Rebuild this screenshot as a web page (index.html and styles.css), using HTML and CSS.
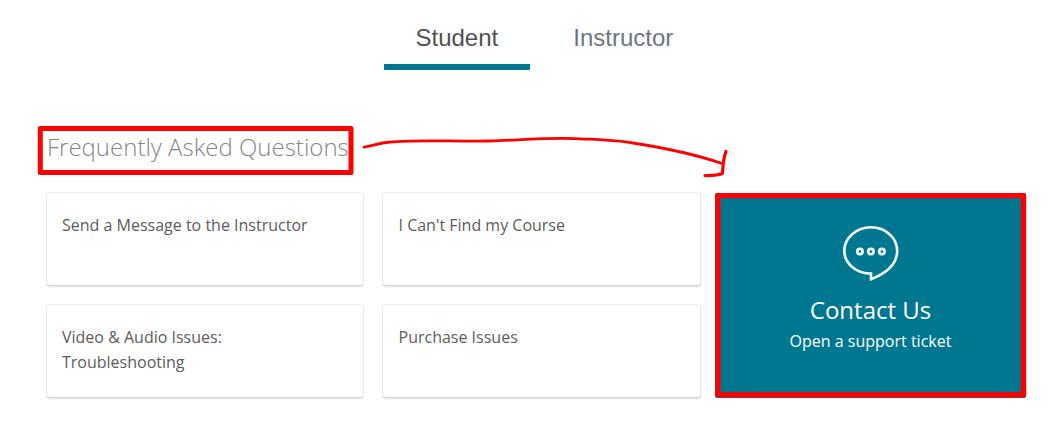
FILE: index.html
```html
<!DOCTYPE html>
<html lang="en">
<head>
<meta charset="utf-8">
<title>Support</title>
<link rel="stylesheet" href="styles.css">
</head>
<body>
<nav class="tabs">
  <a class="tab active">Student</a>
  <a class="tab">Instructor</a>
</nav>
<main class="support">
  <h2 class="heading">Frequently Asked Questions</h2>
  <div class="columns">
    <div class="faq">
      <a class="card">Send a Message to the Instructor</a>
      <a class="card">I Can't Find my Course</a>
      <a class="card">Video &amp; Audio Issues:<br>Troubleshooting</a>
      <a class="card">Purchase Issues</a>
    </div>
    <a class="contact">
      <svg class="bubble" width="56" height="56" viewBox="0 0 56 56" fill="none" stroke="#f4fafb">
        <path stroke-width="2.6" d="M28 1.3C13.3 1.3 1.3 11.8 1.3 24.7S13.3 47.4 28 47.6V53.2C44 47 54.2 37.500 54.2 24.700 54.2 11.800 42.500 1.300 28 1.300Z"/>
        <g stroke-width="2.6"><circle cx="16.9" cy="25.600" r="2.700"/><circle cx="27.900" cy="25.600" r="2.700"/><circle cx="38.900" cy="25.600" r="2.700"/></g>
      </svg>
      <span class="contact-title">Contact Us</span>
      <span class="contact-sub">Open a support ticket</span>
    </a>
  </div>
</main>
<svg class="markup" width="1058" height="429" viewBox="0 0 1058 429" fill="none" stroke="#f00" stroke-linecap="round" stroke-linejoin="round">
  <rect x="40.3" y="128.5" width="310.7" height="44" stroke-width="5"/>
  <rect x="717.8" y="195.6" width="305.8" height="199.2" stroke-width="5.2"/>
  <path stroke-width="2.8" d="M364 147.200C373 145.500 380 143 390 142C416 139.500 450 141.500 490 141C520 140 548 137.500 575 138.600C600 139.800 617 140 633 143C665 148 693 153.500 722 163.500"/>
  <path stroke-width="3.2" d="M726 151.500C723 159 723 166 722.500 173.500C717 175.500 711 175.700 705 175.500"/>
</svg>
</body>
</html>
```
FILE: styles.css
```css
* { box-sizing: border-box; }

body {
  margin: 0;
  height: 429px;
  overflow: hidden;
  background: #fff;
  color: #5c5c5c;
  font-family: "Open Sans", sans-serif;
}

.tabs {
  display: flex;
  gap: 11px;
  padding-left: 383.5px;
  height: 70px;
}

.tab {
  padding: 22px 32px 0;
  border-bottom: 6px solid transparent;
  border-radius: 1px;
  color: #6e7585;
  font: 24px/32px "Liberation Sans", Arial, sans-serif;
}

.tab.active {
  border-bottom-color: #007791;
  color: #505050;
}

.support { padding: 59px 32px 0 47px; }

.heading {
  margin: 0;
  font-size: 24px;
  font-weight: 300;
  line-height: 36px;
  color: #868686;
}

.columns {
  display: flex;
  gap: 15px;
  margin-top: 28px;
}

.faq {
  display: grid;
  grid-template-columns: 316px 317px;
  grid-template-rows: 92px 92px;
  gap: 20px;
}

.card {
  padding: 20px 15px;
  border-radius: 2px;
  background: #fff;
  box-shadow: 0 0 1px 1px rgba(20, 23, 28, .08), 0 2px 2px 0 rgba(20, 23, 28, .13);
  font-size: 16px;
  line-height: 25px;
}

.card:nth-child(even) { padding-left: 15.5px; }

.contact {
  display: flex;
  flex-direction: column;
  align-items: center;
  width: 311px;
  height: 205px;
  padding-top: 33px;
  border-radius: 2px;
  background: #007791;
  color: #fff;
}

.bubble { display: block; }

.contact-title {
  margin-top: 11px;
  font-size: 24px;
  line-height: 34px;
}

.contact-sub {
  margin-top: 2px;
  font-size: 16px;
  line-height: 25px;
}

.markup {
  position: absolute;
  top: 0;
  left: 0;
  pointer-events: none;
}
```
